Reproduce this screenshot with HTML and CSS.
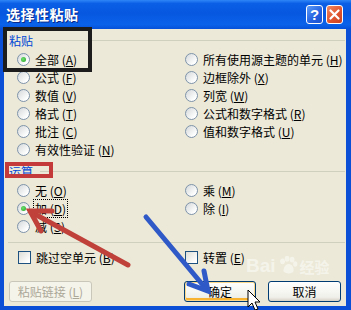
FILE: index.html
```html
<!DOCTYPE html>
<html lang="zh-CN">
<head>
  <meta charset="UTF-8">
  <title>选择性粘贴</title>
  <link rel="stylesheet" href="styles.css">
</head>
<body>
  <div class="window">
    <div class="titlebar">
      <span class="title">选择性粘贴</span>
      <div class="tb-buttons">
        <span class="tb-btn help">?</span>
        <span class="tb-btn close">
          <svg width="11" height="11" viewBox="0 0 11 11"><path d="M1.5 1.5 L9.5 9.5 M9.5 1.5 L1.5 9.5" stroke="#fff" stroke-width="2.2" stroke-linecap="round"/></svg>
        </span>
      </div>
    </div>

    <div class="client">
      <div class="group-head"><span>粘贴</span><i class="line"></i></div>
      <div class="opts">
        <div class="opt"><span class="radio on"></span>全部 (<u>A</u>)</div>
        <div class="opt"><span class="radio"></span>所有使用源主题的单元 (<u>H</u>)</div>
        <div class="opt"><span class="radio"></span>公式 (<u>F</u>)</div>
        <div class="opt"><span class="radio"></span>边框除外 (<u>X</u>)</div>
        <div class="opt"><span class="radio"></span>数值 (<u>V</u>)</div>
        <div class="opt"><span class="radio"></span>列宽 (<u>W</u>)</div>
        <div class="opt"><span class="radio"></span>格式 (<u>T</u>)</div>
        <div class="opt"><span class="radio"></span>公式和数字格式 (<u>R</u>)</div>
        <div class="opt"><span class="radio"></span>批注 (<u>C</u>)</div>
        <div class="opt"><span class="radio"></span>值和数字格式 (<u>U</u>)</div>
        <div class="opt"><span class="radio"></span>有效性验证 (<u>N</u>)</div>
      </div>

      <div class="group-head second"><span>运算</span><i class="line"></i></div>
      <div class="opts">
        <div class="opt"><span class="radio"></span>无 (<u>O</u>)</div>
        <div class="opt"><span class="radio"></span>乘 (<u>M</u>)</div>
        <div class="opt"><span class="radio on"></span><span class="focus">加 (<u>D</u>)</span></div>
        <div class="opt"><span class="radio"></span>除 (<u>I</u>)</div>
        <div class="opt"><span class="radio"></span>减 (<u>S</u>)</div>
      </div>

      <div class="sep"></div>

      <div class="opts checks">
        <div class="opt"><span class="check"></span>跳过空单元 (<u>B</u>)</div>
        <div class="opt"><span class="check"></span>转置 (<u>E</u>)</div>
      </div>

      <div class="buttons">
        <span class="btn disabled">粘贴链接 (<u>L</u>)</span>
        <span class="btn default">确定</span>
        <span class="btn cancel">取消</span>
      </div>
    </div>

    <div class="watermark">
      <span class="wm-bai">Bai</span>
      <svg class="wm-paw" width="20" height="20" viewBox="0 0 22 22">
        <ellipse cx="5" cy="7" rx="2.6" ry="3.2" fill="#fff"/>
        <ellipse cx="10" cy="4" rx="2.6" ry="3.2" fill="#fff"/>
        <ellipse cx="15.5" cy="5" rx="2.6" ry="3.2" fill="#fff"/>
        <ellipse cx="19" cy="10" rx="2.3" ry="3" fill="#fff"/>
        <path d="M6 18 C6 12 10 10 12 10 C15 10 18 14 17 18 C16 21 8 21 6 18 Z" fill="#fff"/>
      </svg>
      <span class="wm-jy">经验</span>
    </div>

    <svg class="annot" width="351" height="310" viewBox="0 0 351 310">
      <rect x="5" y="29" width="85" height="41" fill="none" stroke="#1c1c1c" stroke-width="4"/>
      <rect x="7" y="164" width="44" height="12" fill="none" stroke="#c4393a" stroke-width="4"/>
      <g stroke="#c0403a" stroke-width="5" stroke-linecap="round" fill="none">
        <path d="M128 265 L31 212"/>
        <path d="M41 231 L30 211 L52 211"/>
      </g>
      <g stroke="#3059c8" stroke-width="5" stroke-linecap="round" fill="none">
        <path d="M146 217 L207 290"/>
        <path d="M204 271 L208 291 L189 284"/>
      </g>
      <path d="M248 290 L248 307 L252 303 L255 310 L258 309 L255 302 L260 302 Z" fill="#fff" stroke="#000" stroke-width="1" stroke-linejoin="round"/>
    </svg>
  </div>
</body>
</html>
```

FILE: styles.css
```css
body {
  margin: 0;
  font-family: "Noto Sans CJK SC", "Liberation Sans", sans-serif;
  font-size: 12px;
  background: #fff;
}

.window {
  position: relative;
  width: 351px;
  height: 310px;
  box-sizing: border-box;
  background: #0b4fd6;
  padding: 0 5px 4px 4px;
  display: flex;
  flex-direction: column;
  overflow: hidden;
}

.titlebar {
  height: 29px;
  margin: 0 -5px 0 -4px;
  padding: 0 6px 0 6px;
  display: flex;
  align-items: center;
  justify-content: space-between;
  background: linear-gradient(to bottom, #2f86f7 0%, #0a5fe6 12%, #0757e0 45%, #0a62ea 85%, #0650d8 100%);
}

.title {
  color: #fff;
  font-size: 14px;
  font-weight: bold;
  letter-spacing: 0.5px;
  text-shadow: 1px 1px 0 #0a2a8a;
  margin-top: -2px;
}

.tb-buttons {
  display: flex;
  gap: 3px;
  margin-top: -1px;
  margin-right: 2px;
}

.tb-btn {
  width: 17px;
  height: 19px;
  box-sizing: border-box;
  border: 1px solid #fff;
  border-radius: 3px;
  display: flex;
  align-items: center;
  justify-content: center;
}

.help {
  background: linear-gradient(135deg, #5d9cf8, #2360e0 60%, #1c52cf);
  color: #fff;
  font-weight: bold;
  font-size: 15px;
  font-family: "Liberation Sans", sans-serif;
}

.close {
  background: linear-gradient(135deg, #f08a62, #e0552f 55%, #c84022);
}

.client {
  flex: 1;
  background: #ece9d8;
  padding-top: 3px;
  color: #000;
}

.group-head {
  height: 16px;
  display: flex;
  align-items: center;
  padding-left: 5px;
  padding-right: 1px;
  color: #0046d5;
}

.group-head.second {
  margin-top: 5px;
}

.group-head .line {
  flex: 1;
  height: 1px;
  background: #d0d0bf;
  margin-left: 7px;
}

.opts {
  margin-top: 2px;
  padding-left: 13px;
  display: grid;
  grid-template-columns: 168px 1fr;
  grid-auto-rows: 18px;
}

.opt {
  display: flex;
  align-items: center;
  white-space: pre;
}

.opt u {
  text-decoration: underline;
}

.radio {
  position: relative;
  width: 13px;
  height: 13px;
  box-sizing: border-box;
  border-radius: 50%;
  border: 1px solid #7e93aa;
  background: linear-gradient(135deg, #d4d8d9, #ffffff 80%);
  margin-right: 5px;
  flex: none;
}

.radio.on::after {
  content: "";
  position: absolute;
  left: 3px;
  top: 3px;
  width: 5px;
  height: 5px;
  border-radius: 50%;
  background: radial-gradient(circle at 40% 40%, #6fe06f, #21a121);
}

.focus {
  outline: 1px dotted #000;
  outline-offset: 0;
  padding: 0 1px;
  margin-left: -1px;
}

.sep {
  height: 1px;
  background: #d0d0bf;
  margin: 7px 1px 0 4px;
}

.checks {
  margin-top: 5px;
  padding-left: 14px;
  grid-template-columns: 167px 1fr;
}

.check {
  width: 13px;
  height: 13px;
  box-sizing: border-box;
  border: 1px solid #1c5180;
  background: linear-gradient(135deg, #dcdcd7, #ffffff 85%);
  margin-right: 5px;
  flex: none;
}

.buttons {
  margin-top: 15px;
  display: flex;
  height: 21px;
}

.btn {
  box-sizing: border-box;
  height: 21px;
  border: 1px solid #003c74;
  border-radius: 3px;
  background: linear-gradient(to bottom, #ffffff, #f0f0ea 80%, #d6d0c5);
  display: flex;
  align-items: center;
  justify-content: center;
  white-space: pre;
}

.btn.disabled {
  width: 83px;
  margin-left: 5px;
  border-color: #c9c7ba;
  background: #f5f4ea;
  color: #aca899;
}

.btn.default {
  width: 72px;
  margin-left: 92px;
  box-shadow: inset 0 0 0 1px #fcd88a, inset 0 -2px 0 1px #f8b330;
}

.btn.cancel {
  width: 73px;
  margin-left: 12px;
}

.watermark {
  position: absolute;
  left: 246px;
  top: 255px;
  display: flex;
  align-items: flex-end;
  opacity: 0.5;
  color: #fff;
}

.wm-bai {
  font-family: "Liberation Sans", sans-serif;
  font-weight: bold;
  font-size: 19px;
  line-height: 22px;
}

.wm-paw {
  margin: 0 2px 2px 2px;
}

.wm-jy {
  font-size: 15px;
  line-height: 20px;
  font-weight: bold;
}

.annot {
  position: absolute;
  left: 0;
  top: 0;
  pointer-events: none;
}
```
